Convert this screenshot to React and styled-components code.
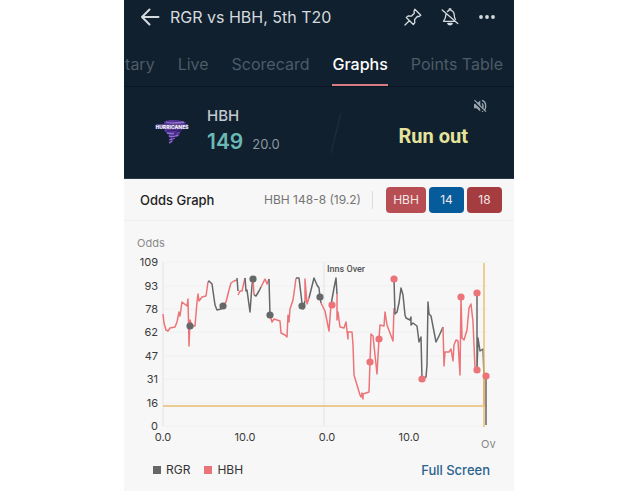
import React from "react";
import styled, { createGlobalStyle } from "styled-components";

const GlobalStyle = createGlobalStyle`
  *, *::before, *::after { box-sizing: border-box; }
  body {
    margin: 0;
    background: #fff;
    font-family: Inter, "Liberation Sans", sans-serif;
  }
  button { font: inherit; border: 0; background: none; padding: 0; color: inherit; cursor: pointer; }
`;

const Page = styled.div`
  display: flex;
  justify-content: center;
  padding-right: 2px;
  min-height: 100vh;
`;

const Phone = styled.main`
  width: 100%;
  max-width: 390px;
  background: #f7f7f7;
  overflow: hidden;
`;

const Dark = styled.header`
  background: #10202e;
  border-bottom: 1px solid #2a3748;
`;

const TopBar = styled.div`
  display: flex;
  align-items: center;
  height: 34px;
  padding: 0 17px 0 16px;
  color: #d5dade;
`;

const IconButton = styled.button`
  display: grid;
  place-items: center;
  width: 20px;
  height: 20px;
  flex: none;
  svg { display: block; }
`;

const Title = styled.h1`
  flex: 1;
  margin: 0 0 0 10px;
  font-size: 16px;
  line-height: 20px;
  font-weight: 400;
  white-space: nowrap;
`;

const Actions = styled.div`
  display: flex;
  gap: 17px;
`;

const Tabs = styled.nav`
  display: flex;
  justify-content: flex-end;
  gap: 23px;
  height: 53px;
  padding-right: 11px;
  border-bottom: 1px solid #0a1726;
  overflow: hidden;
`;

const Tab = styled.button`
  height: 52px;
  flex: none;
  font-size: 16px;
  line-height: 20px;
  white-space: nowrap;
  && {
    padding-top: 10px;
    padding-bottom: 0;
    color: ${(p) => (p.$active ? "#fff" : "#4d5b67")};
    font-weight: ${(p) => (p.$active ? 500 : 400)};
    border-bottom: 2px solid ${(p) => (p.$active ? "#d97b85" : "transparent")};
  }
`;

const Score = styled.section`
  display: grid;
  grid-template-columns: 1fr 24px 166px;
  align-items: center;
  height: 91px;
`;

const Team = styled.div`
  display: flex;
  align-items: center;
  gap: 18px;
  padding-left: 31px;
`;

const TeamName = styled.div`
  font-size: 15px;
  line-height: 20px;
  font-weight: 500;
  color: #c3c9ce;
`;

const Runs = styled.div`
  display: flex;
  align-items: baseline;
  gap: 9px;
  line-height: 32px;
  font-size: 21px;
  font-weight: 600;
  color: #6cb9b4;
`;

const Overs = styled.span`
  font-size: 13px;
  font-weight: 400;
  color: #8d98a1;
`;

const Event = styled.div`
  display: flex;
  flex-direction: column;
  align-items: flex-end;
  gap: 8px;
  height: 100%;
  padding: 9px 24px 0 0;
`;

const EventText = styled.strong`
  margin-right: 22px;
  font-family: Roboto, sans-serif;
  font-size: 20px;
  line-height: 24px;
  font-weight: 700;
  color: #e6e39d;
  white-space: nowrap;
`;

const OddsBar = styled.section`
  display: flex;
  align-items: center;
  height: 42px;
  padding: 0 12px 0 16px;
  border-bottom: 1px solid #efefef;
`;

const Heading = styled.h2`
  flex: 1;
  margin: 0;
  font-size: 13px;
  font-weight: 500;
  color: #222;
`;

const Status = styled.span`
  padding-right: 11px;
  margin-right: 13px;
  border-right: 1px solid #ddd;
  font-size: 12px;
  line-height: 18px;
  color: #747474;
`;

const Chips = styled.div`
  display: flex;
  gap: 3px;
`;

const Chip = styled.button`
  && {
    min-width: ${(p) => (p.$wide ? 40 : 35)}px;
    height: 26px;
    border-radius: 4px;
    background: ${(p) => p.$color};
    color: #f3e6e8;
    font-size: 12px;
  }
`;

const Chart = styled.svg`
  display: block;
  width: 100%;
  font-size: 11px;
`;

const Footer = styled.footer`
  display: flex;
  align-items: center;
  gap: 14px;
  padding: 5px 24px 10px 29px;
`;

const Legend = styled.span`
  display: flex;
  align-items: center;
  gap: 5px;
  font-size: 12px;
  line-height: 20px;
  color: #333;
  &::before {
    content: "";
    width: 8px;
    height: 8px;
    background: ${(p) => p.$color};
  }
`;

const FullScreen = styled.a`
  margin-left: auto;
  font-size: 13px;
  line-height: 20px;
  font-weight: 500;
  color: #2a628c;
  text-decoration: none;
`;

const GREY = "#666769";
const RED = "#ec7479";

const lines = [
  [RED, "163,314 164,323 166,330 168,331 170,328 175,327 177,322 179,312 180,316 182,302 187,306 188,299 189,346 190,320 192,326 195,326 197,302 198,294 199,301 202,297 206,296 208,282"],
  [GREY, "208,282 209,281 212,284 213,291 215,305 217,310 221,309 223,306"],
  [RED, "223,306 226,302 229,290 231,283 234,281 237,280"],
  [GREY, "237,278 238,291"],
  [RED, "238,295 240,291 242,291 245,278"],
  [GREY, "245,278 246,291 247,290 250,312 252,285 253,279"],
  [RED, "253,279 254,295"],
  [GREY, "254,295 256,296 259,291 261,287"],
  [RED, "261,287 265,279 267,284 269,279"],
  [GREY, "269,279 270,315"],
  [RED, "270,315 272,322 274,319 280,321 281,333 285,335 287,337 288,315 289,322 290,309 293,300 295,286 296,278"],
  [GREY, "296,278 299,278 302,303 303,309 305,301"],
  [RED, "305,301 305,279 307,304 309,298"],
  [GREY, "309,298 311,290 314,278 317,285 319,288 320,297 321,303"],
  [RED, "321,303 325,311 329,331 331,305"],
  [GREY, "331,305 334,288 336,278 337,294"],
  [RED, "337,294 337,320 338,312 340,327 344,328 346,322 348,339 348,332 352,332 353,345 354,375 360,395 361,397 362,393 363,399 363,394 369,392 370,362 371,334 373,336 377,374 379,339 380,325 384,326 385,312 387,325 393,341 394,308"],
  [GREY, "394,279 395,314 397,312 399,303 401,288 403,295 405,315 406,318 410,320 411,317 411,325 413,323 417,326 419,342 421,337 422,379 426,377 427,365 428,302 429,314 431,316 436,342 439,336 443,327"],
  [RED, "443,327 444,366 445,352 449,352 451,349 453,361 454,345 456,340 458,341 460,375 461,297 462,338 464,340 467,330 469,308 471,304 473,322 475,368 477,370"],
  [GREY, "477,293 477,370 478,338 480,351 483,349 484,376 486,376 486,425"],
  [RED, "484,376 484,405"],
];

const dots = [
  [GREY, 190, 326], [GREY, 223, 306], [GREY, 253, 279], [GREY, 270, 315],
  [GREY, 302, 306], [GREY, 320, 297], [RED, 332, 305], [RED, 370, 362],
  [RED, 379, 339], [RED, 394, 279], [RED, 422, 379], [RED, 461, 297],
  [RED, 477, 293], [RED, 477, 370], [RED, 486, 376],
];

const rows = [[109, 262], [93, 286], [78, 309], [62, 332], [47, 356], [31, 379], [16, 403], [0, 426]];
const cols = [["0.0", 163], ["10.0", 245], ["0.0", 327], ["10.0", 409]];

function OddsChart() {
  return (
    <Chart viewBox="124 221 390 234" role="img" aria-label="Odds by over">
      <text x="137" y="247" fill="#8b8b8b">Odds</text>
      {rows.map(([label, y]) => (
        <g key={label}>
          <line x1="163" x2="487" y1={y} y2={y} stroke="#f0f0f0" />
          <text x="158" y={y + 4} textAnchor="end" fill="#3b3b3b">{label}</text>
        </g>
      ))}
      {[163, 324].map((x) => (
        <line key={x} x1={x} x2={x} y1="262" y2="426" stroke="#ededed" strokeWidth="2" />
      ))}
      {cols.map(([label, x]) => (
        <text key={x} x={x} y="441" textAnchor="middle" fill="#3b3b3b">{label}</text>
      ))}
      <line x1="163" x2="487" y1="406" y2="406" stroke="#ebcb91" strokeWidth="2" />
      {lines.map(([color, points], i) => (
        <polyline key={i} points={points} fill="none" stroke={color} strokeWidth="1.5" strokeLinejoin="round" />
      ))}
      <line x1="484" x2="484" y1="263" y2="427" stroke="#e8bd65" strokeWidth="2" strokeOpacity="0.7" />
      {dots.map(([color, x, y]) => (
        <circle key={`${x}-${y}`} cx={x} cy={y} r="3.6" fill={color} />
      ))}
      <text x="327" y="272" fill="#555" fontFamily="Roboto, sans-serif" fontSize="9" fontWeight="500">Inns Over</text>
      <text x="481" y="448" fill="#888">Ov</text>
    </Chart>
  );
}

const stroke = { fill: "none", stroke: "currentColor", strokeWidth: 1.3, strokeLinecap: "round", strokeLinejoin: "round" };

const BackIcon = () => (
  <svg width="20" height="20" viewBox="0 0 20 20" {...stroke} strokeWidth="2">
    <path d="M18.5 10H2M9.5 2.500L2 10l7.500 7.500" />
  </svg>
);

const PinIcon = () => (
  <svg width="18" height="18" viewBox="0 0 18 18" {...stroke}>
    <path d="M10.800 1.200l6 6-1.700 1.300-1.500-.2-3 3.200.2 3.200-1.500 1.800-7-7 1.800-1.500 3.200.2 3-3-.3-2zM5.300 12.700L1 17" />
  </svg>
);

const BellOffIcon = () => (
  <svg width="18" height="18" viewBox="0 0 18 18" {...stroke}>
    <path d="M1.200 2l15.600 13.500M5.300 5.500C4.500 7 4.700 9.500 3.800 11L2.500 13.300h11.700M6.500 3.500C7 2.800 7.600 2.500 8.200 2.300V1h1.600v1.300c2.500.7 3.500 2.700 3.500 5.200 0 1.500.4 2.800 1.200 3.800M6.800 15.500c.6 1.800 3.800 1.800 4.400 0z" />
  </svg>
);

const MoreIcon = () => (
  <svg width="18" height="18" viewBox="0 0 18 18" fill="currentColor">
    <circle cx="3" cy="9" r="1.900" /><circle cx="9" cy="9" r="1.900" /><circle cx="15" cy="9" r="1.900" />
  </svg>
);

const MuteIcon = () => (
  <svg width="14" height="14" viewBox="0 0 14 14" fill="none" stroke="#9ba5ad" strokeWidth="1.400">
    <path d="M1 4.800h2.500L7.300 1.500v11L3.500 9.300H1z" fill="#9ba5ad" stroke="none" />
    <path d="M9 4.500c1.400 1.300 1.400 3.500 0 5M9 1.500c4.800 1.300 5 9.500 0 11" />
    <path d="M.8 2.500l11.500 11" stroke="#10202e" />
    <path d="M1.500 1.200l11.500 11.500" strokeWidth="1.200" />
  </svg>
);

const Logo = () => (
  <svg width="34" height="28" viewBox="0 0 34 28" role="img" aria-label="Hurricanes">
    <path d="M9 3c5-3 15-2 22 .2L29 6l-1 4-3 3-1 4-5 2-1 3-3 3 1-5-3-3 2-2-5-2-1-4z" fill="#56359a" />
    <path d="M11 3c5 2 12 1 18 .2M12 14c4 1 8 1 12-1M14 17c3 1 6 1 9-1M14 21l6-2M14 24l3-2" fill="none" stroke="#9575cb" strokeWidth="1.300" />
    <path d="M12 12l14-1-7 4M17 19l4-1" fill="none" stroke="#311c68" strokeWidth="1.200" />
    <rect x="1" y="5" width="32" height="5" fill="#54418a" />
    <text x="17" y="9.500" textAnchor="middle" fontSize="5" fontWeight="800" fill="#f4f0fa">HURRICANES</text>
  </svg>
);

const tabs = ["Commentary", "Live", "Scorecard", "Graphs", "Points Table"];

export default function App() {
  return (
    <>
      <GlobalStyle />
      <Page>
        <Phone>
          <Dark>
            <TopBar>
              <IconButton aria-label="Back"><BackIcon /></IconButton>
              <Title>RGR vs HBH, 5th T20</Title>
              <Actions>
                <IconButton aria-label="Pin match"><PinIcon /></IconButton>
                <IconButton aria-label="Turn off alerts"><BellOffIcon /></IconButton>
                <IconButton aria-label="More"><MoreIcon /></IconButton>
              </Actions>
            </TopBar>
            <Tabs>
              {tabs.map((t) => (
                <Tab key={t} $active={t === "Graphs"}>{t}</Tab>
              ))}
            </Tabs>
            <Score>
              <Team>
                <Logo />
                <div>
                  <TeamName>HBH</TeamName>
                  <Runs>149 <Overs>20.0</Overs></Runs>
                </div>
              </Team>
              <svg width="24" height="44" viewBox="0 0 24 44" aria-hidden="true">
                <path d="M17 2L7 42" stroke="#22313e" />
              </svg>
              <Event>
                <IconButton aria-label="Unmute"><MuteIcon /></IconButton>
                <EventText>Run out</EventText>
              </Event>
            </Score>
          </Dark>
          <OddsBar>
            <Heading>Odds Graph</Heading>
            <Status>HBH 148-8 (19.2)</Status>
            <Chips>
              <Chip $wide $color="#b64e53">HBH</Chip>
              <Chip $color="#065c9b">14</Chip>
              <Chip $color="#a53c40">18</Chip>
            </Chips>
          </OddsBar>
          <OddsChart />
          <Footer>
            <Legend $color={GREY}>RGR</Legend>
            <Legend $color={RED}>HBH</Legend>
            <FullScreen href="#full-screen">Full Screen</FullScreen>
          </Footer>
        </Phone>
      </Page>
    </>
  );
}
